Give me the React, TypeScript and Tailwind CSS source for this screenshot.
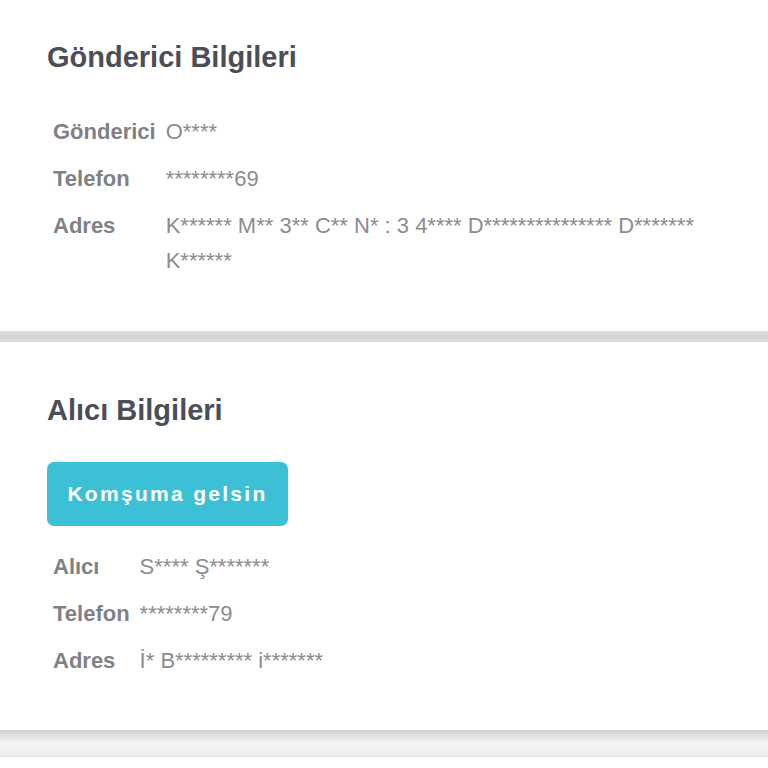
import React from "react";

const font = { fontFamily: '"Liberation Sans", Arial, sans-serif' };

function Row({ label, value }: { label: string; value: string }) {
  return (
    <tr>
      <td className="w-px align-top py-[6px] pl-[6px] pr-[6px] whitespace-nowrap font-bold text-[22px] leading-[35px] text-[#808186]">
        {label}
      </td>
      <td className="align-top py-[6px] pl-[4px] pr-[6px] text-[22px] leading-[35px] text-[#8c8c8e]">
        {value}
      </td>
    </tr>
  );
}

export default function App() {
  return (
    <div className="w-[768px] h-[768px] overflow-hidden bg-[#e6e6e6]" style={font}>
      <div className="bg-white px-[47px] pt-[40px] pb-[47px] h-[331px]">
        <h2 className="text-[29px] leading-[34px] font-bold text-[#4b4e57]">Gönderici Bilgileri</h2>
        <table className="mt-[33.5px] w-full border-collapse">
          <tbody>
            <Row label="Gönderici" value="O****" />
            <Row label="Telefon" value="********69" />
            <Row label="Adres" value="K****** M** 3** C** N* : 3 4**** D*************** D******* K******" />
          </tbody>
        </table>
      </div>
      <div className="h-[11px] bg-gradient-to-b from-[#e2e2e2] via-[#d3d3d3] to-[#dedede]" />
      <div className="bg-white px-[47px] pt-[51px] h-[388px]">
        <h2 className="text-[29px] leading-[34px] font-bold text-[#4b4e57]">Alıcı Bilgileri</h2>
        <button className="mt-[35px] h-[64px] w-[241px] rounded-[7px] bg-[#3bc0d6] text-white font-bold text-[21px] tracking-[2.3px] flex items-center justify-center">
          Komşuma gelsin
        </button>
        <table className="mt-[16.5px] w-full border-collapse">
          <tbody>
            <Row label="Alıcı" value="S**** Ş*******" />
            <Row label="Telefon" value="********79" />
            <Row label="Adres" value="İ* B********* i*******" />
          </tbody>
        </table>
      </div>
      <div className="h-[27px] bg-gradient-to-b from-[#d0d0d0] via-[#f6f6f6] to-[#ececec] border-b border-[#e0e0e0]" />
      <div className="bg-white h-[20px]" />
    </div>
  );
}
